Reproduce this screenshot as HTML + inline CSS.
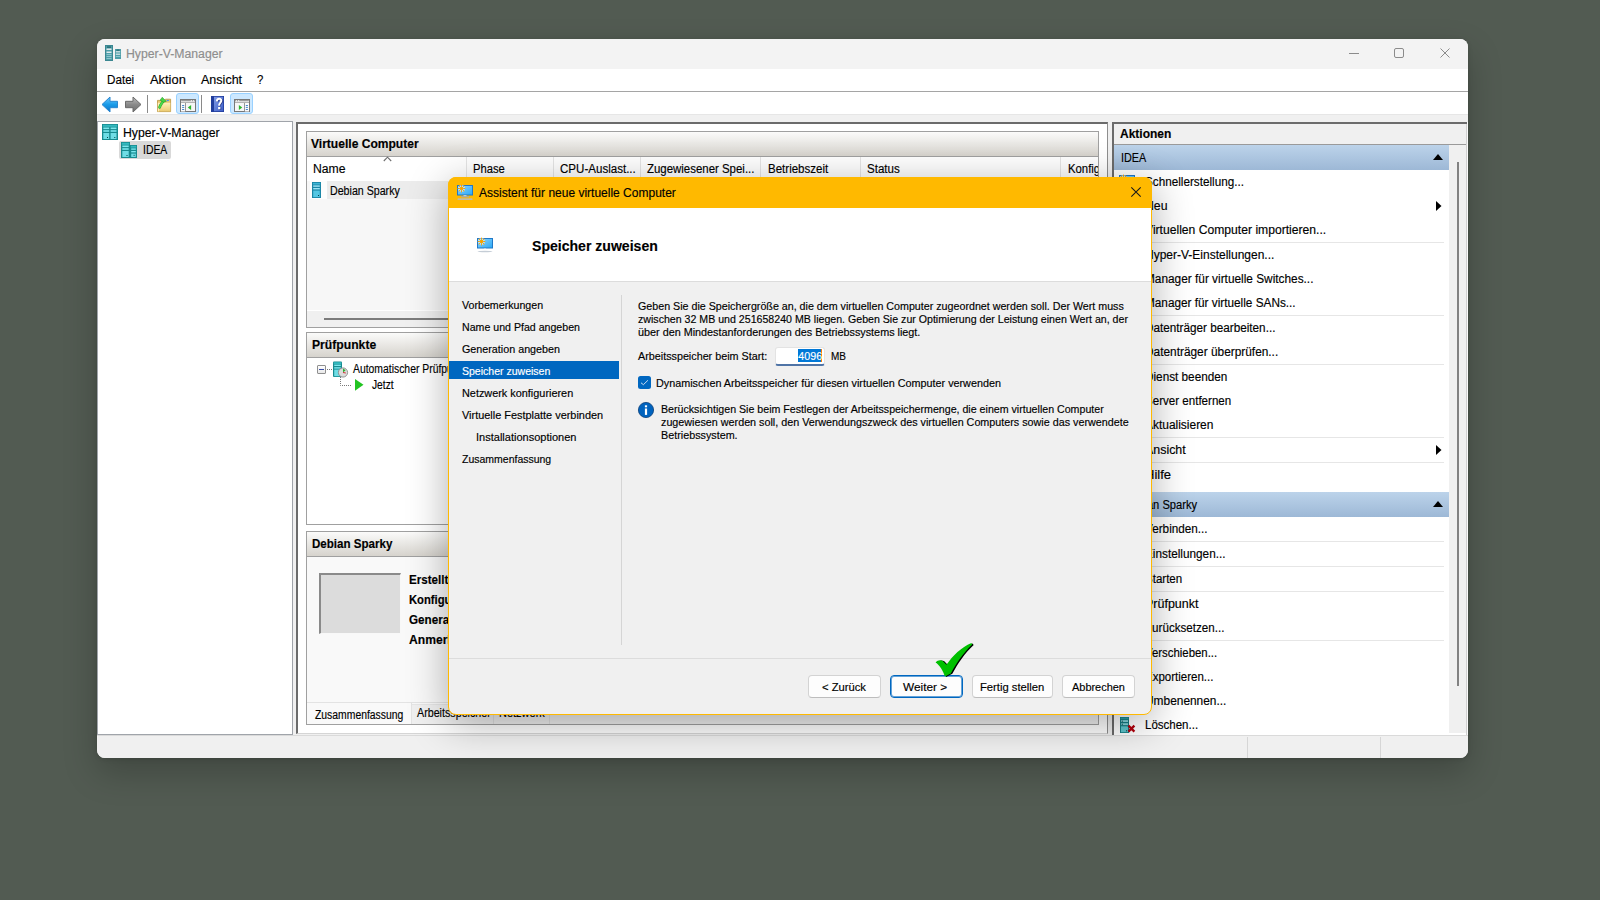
<!DOCTYPE html>
<html><head><meta charset="utf-8"><style>
*{margin:0;padding:0;box-sizing:border-box}
html,body{width:1600px;height:900px;overflow:hidden;background:#525b52;font-family:"Liberation Sans",sans-serif}
.t{position:absolute;white-space:nowrap;-webkit-text-stroke:0.15px currentColor}
svg{position:absolute;overflow:visible}
div{position:absolute}
</style></head>
<body>
<div style="position:absolute;left:97px;top:39px;width:1371px;height:719px;border-radius:8px;background:#f0f0f0;box-shadow:0 14px 34px rgba(0,0,0,0.22),0 1px 5px rgba(0,0,0,0.12)"></div>
<div style="position:absolute;left:97px;top:39px;width:1371px;height:30px;background:#f3f3f3;border-radius:8px 8px 0 0"></div>
<svg style="left:105px;top:44px;" width="17" height="17" viewBox="0 0 17 17">
<rect x="0" y="1" width="8" height="16" fill="#4e9ea8"/><rect x="0.5" y="1.5" width="7" height="15" fill="none" stroke="#3b8791" stroke-width="1"/>
<rect x="2" y="2.5" width="4" height="1.2" fill="#1f5f66"/>
<rect x="1.5" y="4.5" width="5" height="1.5" fill="#dfe9ec"/><rect x="1.5" y="7.5" width="5" height="1.5" fill="#dfe9ec"/>
<rect x="1.5" y="10" width="5" height="0.8" fill="#9fd0d8"/><rect x="1.5" y="12" width="5" height="0.8" fill="#9fd0d8"/><rect x="1.5" y="14" width="5" height="0.8" fill="#9fd0d8"/>
<rect x="10" y="5" width="6" height="10" fill="#4e9ea8"/><rect x="11.5" y="5.6" width="3" height="1" fill="#1f5f66"/>
<rect x="10.8" y="7.2" width="4.4" height="1.2" fill="#dfe9ec"/><rect x="10.8" y="9.6" width="4.4" height="1.2" fill="#dfe9ec"/>
<rect x="10.8" y="12" width="4.4" height="0.8" fill="#9fd0d8"/></svg>
<div class="t" style="left:126px;top:46.84px;font-size:12px;line-height:15.0px;color:#8e8e8e;font-weight:normal;transform:scaleX(1.0201);transform-origin:0 0;">Hyper-V-Manager</div>
<div style="position:absolute;left:1349px;top:53px;width:10px;height:1px;background:#8b8b8b"></div>
<div style="position:absolute;left:1394px;top:48px;width:10px;height:10px;border:1px solid #8b8b8b;border-radius:2px"></div>
<svg style="left:1440px;top:48px;" width="10" height="10" viewBox="0 0 10 10"><path d="M0.5 0.5L9.5 9.5M9.5 0.5L0.5 9.5" stroke="#8b8b8b" stroke-width="1"/></svg>
<div style="position:absolute;left:97px;top:69px;width:1371px;height:22px;background:#fff"></div>
<div style="position:absolute;left:97px;top:91px;width:1371px;height:1px;background:#a5a5a5"></div>
<div class="t" style="left:107.4px;top:72.94px;font-size:12px;line-height:15.0px;color:#000;font-weight:normal;transform:scaleX(0.9710);transform-origin:0 0;">Datei</div>
<div class="t" style="left:150px;top:72.94px;font-size:12px;line-height:15.0px;color:#000;font-weight:normal;transform:scaleX(1.0734);transform-origin:0 0;">Aktion</div>
<div class="t" style="left:200.7px;top:72.94px;font-size:12px;line-height:15.0px;color:#000;font-weight:normal;transform:scaleX(1.0445);transform-origin:0 0;">Ansicht</div>
<div class="t" style="left:257px;top:72.94px;font-size:12px;line-height:15.0px;color:#000;font-weight:normal;transform:scaleX(0.9441);transform-origin:0 0;">?</div>
<div style="position:absolute;left:97px;top:92px;width:1371px;height:22px;background:#fff"></div>
<div style="position:absolute;left:97px;top:114px;width:1371px;height:1px;background:#e6e6e6"></div>
<svg style="left:101px;top:96px;" width="18" height="17" viewBox="0 0 18 17"><defs><linearGradient id="gb" x1="0" y1="0" x2="0" y2="1"><stop offset="0" stop-color="#6fcaff"/><stop offset="0.5" stop-color="#1a9be8"/><stop offset="1" stop-color="#0d74c9"/></linearGradient>
<linearGradient id="gg" x1="0" y1="0" x2="0" y2="1"><stop offset="0" stop-color="#bdbdbd"/><stop offset="0.5" stop-color="#8a8a8a"/><stop offset="1" stop-color="#6d6d6d"/></linearGradient></defs>
<path d="M1 8.5L9 1V5.3H16.5V11.7H9V16Z" fill="url(#gb)" stroke="#2a86d0" stroke-width="1" stroke-linejoin="round"/></svg>
<svg style="left:124px;top:96px;" width="18" height="17" viewBox="0 0 18 17"><path d="M17 8.5L9 1V5.3H1.5V11.7H9V16Z" fill="url(#gg)" stroke="#6a6a6a" stroke-width="1" stroke-linejoin="round"/></svg>
<div style="position:absolute;left:147px;top:95px;width:1px;height:18px;background:#8a8a8a"></div>
<svg style="left:157px;top:97px;" width="15" height="16" viewBox="0 0 15 16"><defs><linearGradient id="gf" x1="0" y1="0" x2="0" y2="1"><stop offset="0" stop-color="#fff0b8"/><stop offset="1" stop-color="#eccb72"/></linearGradient></defs>
<path d="M0.5 3.4H7.6L8.4 2.2H13.6V14.6H0.5Z" fill="#e9c66f" stroke="#b9933f" stroke-width="0.8"/>
<rect x="0.9" y="5.8" width="12.4" height="8.5" fill="url(#gf)"/><rect x="0.9" y="5.8" width="1" height="8.5" fill="#fff3c2"/>
<ellipse cx="10.8" cy="3.5" rx="1.3" ry="0.75" fill="#4b8fe6"/>
<path d="M2.6 10.3C3.2 8.2 4.6 6.6 6.2 4.2" fill="none" stroke="#2f9f2f" stroke-width="2.8" stroke-linecap="round"/>
<path d="M2.6 10.3C3.2 8.2 4.6 6.6 6.2 4.2" fill="none" stroke="#4cdc4c" stroke-width="1.8" stroke-linecap="round"/>
<path d="M3.1 3.2L5.2 0.3L9.3 4.4L6.4 5.2Z" fill="#45d645" stroke="#2a9a2a" stroke-width="0.6" stroke-linejoin="round"/></svg>
<div style="position:absolute;left:176px;top:93px;width:23px;height:21px;background:#cce8ff;border:1px solid #99d1ff;border-radius:3px"></div>
<svg style="left:180px;top:99px;" width="16" height="13" viewBox="0 0 16 13"><g><rect x="0.5" y="0.5" width="15" height="12" fill="#f6f6f6" stroke="#777" stroke-width="1"/>
<rect x="1" y="1" width="14" height="2.3" fill="#e6e6e6"/>
<rect x="1.2" y="1.2" width="9.6" height="0.9" fill="#8a8a8a"/><rect x="12" y="1.2" width="1" height="1" fill="#8a8a8a"/><rect x="14" y="1.2" width="1" height="1" fill="#8a8a8a"/>
<rect x="1" y="3.3" width="14" height="0.7" fill="#9a9a9a"/>
<rect x="1" y="4" width="4" height="8.5" fill="#fbfbfb"/><rect x="5" y="4" width="0.9" height="8.5" fill="#8d8d8d"/>
<rect x="2.1" y="6.1" width="2.1" height="0.9" fill="#2f78c8"/><rect x="2.1" y="7.9" width="2.1" height="0.9" fill="#2f78c8"/><rect x="2.1" y="10" width="2.1" height="0.9" fill="#2f78c8"/>
<path d="M7.8 8.5L11.1 6V11Z" fill="#2db52d"/></g></svg>
<div style="position:absolute;left:201px;top:95px;width:1px;height:18px;background:#8a8a8a"></div>
<svg style="left:211px;top:96px;" width="13" height="16" viewBox="0 0 13 16"><defs><linearGradient id="gh" x1="0" y1="0" x2="1" y2="1"><stop offset="0" stop-color="#7f9ae6"/><stop offset="1" stop-color="#3f5fc8"/></linearGradient></defs>
<rect x="0" y="0" width="13" height="16" fill="#213d9c"/><rect x="3" y="0.8" width="9.2" height="14.4" fill="url(#gh)"/>
<path d="M5.9 5.4C5.9 3.5 6.9 2.7 8.1 2.7C9.5 2.7 10.3 3.6 10.3 4.8C10.3 6.5 8.3 7.1 8.2 8.9V9.8" fill="none" stroke="#1d2f80" stroke-width="2.2" transform="translate(0.5,0.4)"/>
<path d="M5.9 5.4C5.9 3.5 6.9 2.7 8.1 2.7C9.5 2.7 10.3 3.6 10.3 4.8C10.3 6.5 8.3 7.1 8.2 8.9V9.8" fill="none" stroke="#fff" stroke-width="2"/>
<rect x="7.6" y="11.3" width="2.6" height="2.4" fill="#1d2f80"/><rect x="7.1" y="11" width="2.3" height="2.3" fill="#fff"/></svg>
<div style="position:absolute;left:230px;top:93px;width:23px;height:21px;background:#cce8ff;border:1px solid #99d1ff;border-radius:3px"></div>
<svg style="left:234px;top:99px;" width="16" height="13" viewBox="0 0 16 13"><g transform="translate(16,0) scale(-1,1)"><rect x="0.5" y="0.5" width="15" height="12" fill="#f6f6f6" stroke="#777" stroke-width="1"/>
<rect x="1" y="1" width="14" height="2.3" fill="#e6e6e6"/>
<rect x="1.2" y="1.2" width="9.6" height="0.9" fill="#8a8a8a"/><rect x="12" y="1.2" width="1" height="1" fill="#8a8a8a"/><rect x="14" y="1.2" width="1" height="1" fill="#8a8a8a"/>
<rect x="1" y="3.3" width="14" height="0.7" fill="#9a9a9a"/>
<rect x="1" y="4" width="4" height="8.5" fill="#fbfbfb"/><rect x="5" y="4" width="0.9" height="8.5" fill="#8d8d8d"/>
<rect x="2.1" y="6.1" width="2.1" height="0.9" fill="#2f78c8"/><rect x="2.1" y="7.9" width="2.1" height="0.9" fill="#2f78c8"/><rect x="2.1" y="10" width="2.1" height="0.9" fill="#2f78c8"/>
<path d="M7.8 8.5L11.1 6V11Z" fill="#2db52d"/></g></svg>
<div style="position:absolute;left:97px;top:121px;width:196px;height:614px;background:#fff;border:1px solid #a0a4aa"></div>
<svg style="left:102px;top:124px;" width="16" height="16" viewBox="0 0 16 16"><rect x="0" y="0" width="16" height="16" fill="#178a8f"/><rect x="0.8" y="0.8" width="14.4" height="2" fill="#33b9bf"/>
<rect x="1.3" y="3.5" width="5.9" height="1.6" fill="#7be7ee"/><rect x="8.6" y="3.5" width="5.9" height="1.6" fill="#7be7ee"/>
<rect x="1.3" y="6.2" width="5.9" height="1.6" fill="#7be7ee"/><rect x="8.6" y="6.2" width="5.9" height="1.6" fill="#7be7ee"/>
<rect x="1.3" y="9" width="5.9" height="6" fill="#6fdde5"/><rect x="8.6" y="9" width="5.9" height="6" fill="#6fdde5"/>
<rect x="5" y="13" width="1" height="1" fill="#0a3f44"/><rect x="12.3" y="13" width="1" height="1" fill="#0a3f44"/></svg>
<div style="position:absolute;left:119px;top:141px;width:52px;height:18px;background:#d9d9d9;border-radius:2px"></div>
<svg style="left:121px;top:142px;" width="16" height="16" viewBox="0 0 16 16"><rect x="0" y="0" width="9" height="16" fill="#178a8f"/><rect x="0.8" y="0.8" width="7.4" height="2" fill="#33b9bf"/>
<rect x="1.3" y="3.5" width="6.4" height="1.6" fill="#7be7ee"/><rect x="1.3" y="6.2" width="6.4" height="1.6" fill="#7be7ee"/>
<rect x="1.3" y="9" width="6.4" height="6" fill="#6fdde5"/><rect x="5.5" y="13" width="1" height="1" fill="#0a3f44"/>
<rect x="9" y="3" width="7" height="13" fill="#178a8f"/><rect x="9.8" y="3.8" width="5.4" height="1.8" fill="#33b9bf"/>
<rect x="10.2" y="6.4" width="4.6" height="1.4" fill="#7be7ee"/><rect x="10.2" y="9" width="4.6" height="1.4" fill="#7be7ee"/><rect x="10.2" y="11.6" width="4.6" height="3.4" fill="#6fdde5"/>
<rect x="12.6" y="12.8" width="1" height="1" fill="#0a3f44"/></svg>
<div class="t" style="left:123.2px;top:125.54px;font-size:12px;line-height:15.0px;color:#000;font-weight:normal;transform:scaleX(1.0201);transform-origin:0 0;">Hyper-V-Manager</div>
<div class="t" style="left:142.5px;top:143.04px;font-size:12px;line-height:15.0px;color:#000;font-weight:normal;transform:scaleX(0.8676);transform-origin:0 0;">IDEA</div>
<div style="position:absolute;left:296px;top:122px;width:812px;height:612px;background:#fff;border-top:2px solid #6b6b6b;border-left:2px solid #6b6b6b;border-right:1px solid #8e8e8e;border-bottom:1px solid #d5d5d5"></div>
<div style="position:absolute;left:306px;top:131px;width:793px;height:197px;background:#fff;border:1px solid #a0a0a0"></div>
<div style="position:absolute;left:307px;top:132px;width:791px;height:25px;background:linear-gradient(#fbfbfa,#d6d3cd);border-bottom:1px solid #a0a0a0"></div>
<div class="t" style="left:311.2px;top:137.34px;font-size:12px;line-height:15.0px;color:#000;font-weight:bold;transform:scaleX(1.0044);transform-origin:0 0;">Virtuelle Computer</div>
<div style="position:absolute;left:306px;top:332px;width:793px;height:193px;background:#fff;border:1px solid #a0a0a0"></div>
<div style="position:absolute;left:307px;top:333px;width:791px;height:25px;background:linear-gradient(#fbfbfa,#d6d3cd);border-bottom:1px solid #a0a0a0"></div>
<div class="t" style="left:311.5px;top:337.84px;font-size:12px;line-height:15.0px;color:#000;font-weight:bold;transform:scaleX(1.0137);transform-origin:0 0;">Prüfpunkte</div>
<div style="position:absolute;left:306px;top:531px;width:793px;height:194px;background:#f9f9f9;border:1px solid #a0a0a0"></div>
<div style="position:absolute;left:307px;top:532px;width:791px;height:25px;background:linear-gradient(#fbfbfa,#d6d3cd);border-bottom:1px solid #a0a0a0"></div>
<div class="t" style="left:311.5px;top:537.34px;font-size:12px;line-height:15.0px;color:#000;font-weight:bold;transform:scaleX(0.9633);transform-origin:0 0;">Debian Sparky</div>
<div style="position:absolute;left:466px;top:157px;width:1px;height:20px;background:#e5e5e5"></div>
<div style="position:absolute;left:553px;top:157px;width:1px;height:20px;background:#e5e5e5"></div>
<div style="position:absolute;left:640px;top:157px;width:1px;height:20px;background:#e5e5e5"></div>
<div style="position:absolute;left:760px;top:157px;width:1px;height:20px;background:#e5e5e5"></div>
<div style="position:absolute;left:860px;top:157px;width:1px;height:20px;background:#e5e5e5"></div>
<div style="position:absolute;left:1060px;top:157px;width:1px;height:20px;background:#e5e5e5"></div>
<div class="t" style="left:313.3px;top:162.34px;font-size:12px;line-height:15.0px;color:#000;font-weight:normal;transform:scaleX(1.0154);transform-origin:0 0;">Name</div>
<div class="t" style="left:473px;top:162.34px;font-size:12px;line-height:15.0px;color:#000;font-weight:normal;transform:scaleX(0.9346);transform-origin:0 0;">Phase</div>
<div class="t" style="left:560px;top:162.34px;font-size:12px;line-height:15.0px;color:#000;font-weight:normal;transform:scaleX(0.9633);transform-origin:0 0;">CPU-Auslast...</div>
<div class="t" style="left:647px;top:162.34px;font-size:12px;line-height:15.0px;color:#000;font-weight:normal;transform:scaleX(0.9528);transform-origin:0 0;">Zugewiesener Spei...</div>
<div class="t" style="left:767.6px;top:162.34px;font-size:12px;line-height:15.0px;color:#000;font-weight:normal;transform:scaleX(0.9602);transform-origin:0 0;">Betriebszeit</div>
<div class="t" style="left:867px;top:162.34px;font-size:12px;line-height:15.0px;color:#000;font-weight:normal;transform:scaleX(0.9642);transform-origin:0 0;">Status</div>
<div style="left:1061px;top:157px;width:37px;height:22px;overflow:hidden">
<div class="t" style="left:6.5px;top:5.34px;font-size:12px;line-height:15.0px;color:#000;font-weight:normal;transform:scaleX(0.9447);transform-origin:0 0;">Konfiguration</div>
</div>
<svg style="left:383px;top:156px;" width="9" height="6" viewBox="0 0 9 6"><path d="M0.8 5L4.5 1.2L8.2 5" fill="none" stroke="#6d6d6d" stroke-width="1.1"/></svg>
<div style="position:absolute;left:307px;top:181px;width:791px;height:130px;background:#f7f7f7"></div>
<div style="position:absolute;left:310px;top:181px;width:17px;height:18px;background:#fdfdfd"></div>
<div style="position:absolute;left:327px;top:181px;width:771px;height:18px;background:#ececec"></div>
<svg style="left:312px;top:182px;" width="9" height="16" viewBox="0 0 9 16"><rect x="0" y="0" width="9" height="16" fill="#1b86a6"/><rect x="0.9" y="0.9" width="7.2" height="1.6" fill="#3fb5d5"/>
<rect x="1.2" y="3.4" width="6.6" height="1.4" fill="#9de4f5"/><rect x="1.2" y="6" width="6.6" height="1.4" fill="#9de4f5"/>
<rect x="1.2" y="8.6" width="6.6" height="6.5" fill="#55c7e3"/><rect x="6" y="13" width="1" height="1" fill="#0a3f44"/></svg>
<div class="t" style="left:329.5px;top:184.34px;font-size:12px;line-height:15.0px;color:#000;font-weight:normal;transform:scaleX(0.8869);transform-origin:0 0;">Debian Sparky</div>
<div style="position:absolute;left:307px;top:310px;width:791px;height:1px;background:#fff"></div>
<div style="position:absolute;left:307px;top:311px;width:791px;height:16px;background:#f0f0f0"></div>
<div style="position:absolute;left:324px;top:318px;width:770px;height:2px;background:#7c7c7c"></div>
<div style="position:absolute;left:317px;top:365px;width:9px;height:9px;border:1px solid #8f8f8f;border-radius:1px;background:linear-gradient(#fff,#e8e8e8)"></div>
<div style="position:absolute;left:319px;top:369px;width:5px;height:1px;background:#3a4fa8"></div>
<svg style="left:327px;top:369px;" width="6" height="1" viewBox="0 0 6 1"><path d="M0 0.5H6" stroke="#777" stroke-dasharray="1 1"/></svg>
<svg style="left:333px;top:361px;" width="15" height="17" viewBox="0 0 15 17"><rect x="0" y="0.5" width="9" height="15.5" rx="1" fill="#178a8f"/><rect x="0.8" y="1.2" width="7.4" height="1.8" fill="#33b9bf"/>
<rect x="1.2" y="3.6" width="6.6" height="1.4" fill="#7be7ee"/><rect x="1.2" y="6.2" width="6.6" height="1.4" fill="#7be7ee"/><rect x="1.2" y="8.6" width="6.6" height="6.6" fill="#6fdde5"/>
<circle cx="10" cy="11.5" r="4.6" fill="#dcdcdc" stroke="#8a8a8a" stroke-width="0.9"/><path d="M10 11.5L12.6 9.2L10 7.4Z" fill="#30b030"/><path d="M10 11.5L12.8 12" stroke="#d02020" stroke-width="0.9"/></svg>
<svg style="left:340px;top:377px;" width="12" height="10" viewBox="0 0 12 10"><path d="M0.5 0V8.5H11" fill="none" stroke="#777" stroke-dasharray="1 1"/></svg>
<svg style="left:355px;top:379px;" width="9" height="12" viewBox="0 0 9 12"><path d="M0 0L8.5 5.8L0 11.7Z" fill="#22c422"/></svg>
<div class="t" style="left:353.2px;top:362.14px;font-size:12px;line-height:15.0px;color:#000;font-weight:normal;transform:scaleX(0.8653);transform-origin:0 0;">Automatischer Prüfpunkt</div>
<div class="t" style="left:372px;top:378.34px;font-size:12px;line-height:15.0px;color:#000;font-weight:normal;transform:scaleX(0.8524);transform-origin:0 0;">Jetzt</div>
<div style="position:absolute;left:319px;top:573px;width:82px;height:61px;background:#dcdcdc;border-top:2px solid #8a8a8a;border-left:2px solid #8a8a8a;border-right:1px solid #f8f8f8;border-bottom:1px solid #f8f8f8"></div>
<div class="t" style="left:409.3px;top:573.14px;font-size:12px;line-height:15.0px;color:#000;font-weight:bold;transform:scaleX(0.9679);transform-origin:0 0;">Erstellt:</div>
<div class="t" style="left:409.3px;top:593.14px;font-size:12px;line-height:15.0px;color:#000;font-weight:bold;transform:scaleX(0.9361);transform-origin:0 0;">Konfigurationsversion:</div>
<div class="t" style="left:409.3px;top:613.14px;font-size:12px;line-height:15.0px;color:#000;font-weight:bold;transform:scaleX(0.9719);transform-origin:0 0;">Generation:</div>
<div class="t" style="left:409.3px;top:633.14px;font-size:12px;line-height:15.0px;color:#000;font-weight:bold;transform:scaleX(1.0094);transform-origin:0 0;">Anmerkungen:</div>
<div style="position:absolute;left:307px;top:702px;width:791px;height:1px;background:#e3e3e3"></div>
<div style="position:absolute;left:411px;top:704px;width:687px;height:20px;background:#f0f0f0;border-top:1px solid #e6e6e6"></div>
<div style="position:absolute;left:411px;top:703px;width:1px;height:21px;background:#e3e3e3"></div>
<div style="position:absolute;left:493px;top:704px;width:1px;height:20px;background:#e0e0e0"></div>
<div style="position:absolute;left:549px;top:704px;width:1px;height:20px;background:#e0e0e0"></div>
<div class="t" style="left:315.2px;top:707.84px;font-size:12px;line-height:15.0px;color:#000;font-weight:normal;transform:scaleX(0.8654);transform-origin:0 0;">Zusammenfassung</div>
<div class="t" style="left:416.9px;top:705.84px;font-size:12px;line-height:15.0px;color:#000;font-weight:normal;transform:scaleX(0.8924);transform-origin:0 0;">Arbeitsspeicher</div>
<div class="t" style="left:499px;top:705.84px;font-size:12px;line-height:15.0px;color:#000;font-weight:normal;transform:scaleX(0.9159);transform-origin:0 0;">Netzwerk</div>
<div style="position:absolute;left:1112px;top:122px;width:356px;height:613px;background:#fff;border-top:2px solid #6b6b6b;border-left:2px solid #6b6b6b"></div>
<div style="position:absolute;left:1114px;top:124px;width:352px;height:21px;background:#f0f0f0;border-bottom:1.5px solid #9a9a9a"></div>
<div class="t" style="left:1119.5px;top:126.84px;font-size:12px;line-height:15.0px;color:#000;font-weight:bold;transform:scaleX(0.9994);transform-origin:0 0;">Aktionen</div>
<div style="position:absolute;left:1114px;top:145px;width:335px;height:25px;background:linear-gradient(#bcd3ea,#9db8d6)"></div>
<div class="t" style="left:1121.3px;top:150.84px;font-size:12px;line-height:15.0px;color:#000;font-weight:normal;transform:scaleX(0.8997);transform-origin:0 0;">IDEA</div>
<svg style="left:1433px;top:154px;" width="10" height="6" viewBox="0 0 10 6"><path d="M0 6L5 0L10 6Z" fill="#000"/></svg>
<div class="t" style="left:1145px;top:175.14px;font-size:12px;line-height:15.0px;color:#000;font-weight:normal;transform:scaleX(0.9765);transform-origin:0 0;">Schnellerstellung...</div>
<div class="t" style="left:1145px;top:199.14px;font-size:12px;line-height:15.0px;color:#000;font-weight:normal;transform:scaleX(1.0221);transform-origin:0 0;">Neu</div>
<svg style="left:1436px;top:201px;" width="6" height="10" viewBox="0 0 6 10"><path d="M0 0L5.5 5L0 10Z" fill="#000"/></svg>
<div class="t" style="left:1145px;top:223.14px;font-size:12px;line-height:15.0px;color:#000;font-weight:normal;transform:scaleX(1.0113);transform-origin:0 0;">Virtuellen Computer importieren...</div>
<div style="position:absolute;left:1120px;top:242px;width:324px;height:1px;background:#e6e6e6"></div>
<div class="t" style="left:1145px;top:248.14px;font-size:12px;line-height:15.0px;color:#000;font-weight:normal;transform:scaleX(0.9993);transform-origin:0 0;">Hyper-V-Einstellungen...</div>
<div class="t" style="left:1145px;top:272.14px;font-size:12px;line-height:15.0px;color:#000;font-weight:normal;transform:scaleX(0.9864);transform-origin:0 0;">Manager für virtuelle Switches...</div>
<div class="t" style="left:1145px;top:296.14px;font-size:12px;line-height:15.0px;color:#000;font-weight:normal;transform:scaleX(0.9818);transform-origin:0 0;">Manager für virtuelle SANs...</div>
<div style="position:absolute;left:1120px;top:315px;width:324px;height:1px;background:#e6e6e6"></div>
<div class="t" style="left:1145px;top:321.14px;font-size:12px;line-height:15.0px;color:#000;font-weight:normal;transform:scaleX(0.9775);transform-origin:0 0;">Datenträger bearbeiten...</div>
<div class="t" style="left:1145px;top:345.14px;font-size:12px;line-height:15.0px;color:#000;font-weight:normal;transform:scaleX(0.9886);transform-origin:0 0;">Datenträger überprüfen...</div>
<div style="position:absolute;left:1120px;top:364px;width:324px;height:1px;background:#e6e6e6"></div>
<div class="t" style="left:1145px;top:370.14px;font-size:12px;line-height:15.0px;color:#000;font-weight:normal;transform:scaleX(0.9791);transform-origin:0 0;">Dienst beenden</div>
<div class="t" style="left:1145px;top:394.14px;font-size:12px;line-height:15.0px;color:#000;font-weight:normal;transform:scaleX(0.9644);transform-origin:0 0;">Server entfernen</div>
<div class="t" style="left:1145px;top:418.14px;font-size:12px;line-height:15.0px;color:#000;font-weight:normal;transform:scaleX(0.9957);transform-origin:0 0;">Aktualisieren</div>
<div style="position:absolute;left:1120px;top:437px;width:324px;height:1px;background:#e6e6e6"></div>
<div class="t" style="left:1145px;top:443.14px;font-size:12px;line-height:15.0px;color:#000;font-weight:normal;transform:scaleX(1.0343);transform-origin:0 0;">Ansicht</div>
<svg style="left:1436px;top:445px;" width="6" height="10" viewBox="0 0 6 10"><path d="M0 0L5.5 5L0 10Z" fill="#000"/></svg>
<div style="position:absolute;left:1120px;top:462px;width:324px;height:1px;background:#e6e6e6"></div>
<div class="t" style="left:1145px;top:468.14px;font-size:12px;line-height:15.0px;color:#000;font-weight:normal;transform:scaleX(1.0872);transform-origin:0 0;">Hilfe</div>
<div style="position:absolute;left:1114px;top:492px;width:335px;height:25px;background:linear-gradient(#bcd3ea,#9db8d6)"></div>
<div class="t" style="left:1123.5px;top:497.84px;font-size:12px;line-height:15.0px;color:#000;font-weight:normal;transform:scaleX(0.9288);transform-origin:0 0;">Debian Sparky</div>
<svg style="left:1433px;top:501px;" width="10" height="6" viewBox="0 0 10 6"><path d="M0 6L5 0L10 6Z" fill="#000"/></svg>
<div class="t" style="left:1145px;top:522.14px;font-size:12px;line-height:15.0px;color:#000;font-weight:normal;transform:scaleX(0.9774);transform-origin:0 0;">Verbinden...</div>
<div style="position:absolute;left:1120px;top:541px;width:324px;height:1px;background:#e6e6e6"></div>
<div class="t" style="left:1145px;top:547.14px;font-size:12px;line-height:15.0px;color:#000;font-weight:normal;transform:scaleX(0.9811);transform-origin:0 0;">Einstellungen...</div>
<div style="position:absolute;left:1120px;top:566px;width:324px;height:1px;background:#e6e6e6"></div>
<div class="t" style="left:1145px;top:572.14px;font-size:12px;line-height:15.0px;color:#000;font-weight:normal;transform:scaleX(0.9616);transform-origin:0 0;">Starten</div>
<div style="position:absolute;left:1120px;top:591px;width:324px;height:1px;background:#e6e6e6"></div>
<div class="t" style="left:1145px;top:597.14px;font-size:12px;line-height:15.0px;color:#000;font-weight:normal;transform:scaleX(1.0397);transform-origin:0 0;">Prüfpunkt</div>
<div class="t" style="left:1145px;top:621.14px;font-size:12px;line-height:15.0px;color:#000;font-weight:normal;transform:scaleX(0.9680);transform-origin:0 0;">Zurücksetzen...</div>
<div style="position:absolute;left:1120px;top:640px;width:324px;height:1px;background:#e6e6e6"></div>
<div class="t" style="left:1145px;top:646.14px;font-size:12px;line-height:15.0px;color:#000;font-weight:normal;transform:scaleX(0.9494);transform-origin:0 0;">Verschieben...</div>
<div class="t" style="left:1145px;top:670.14px;font-size:12px;line-height:15.0px;color:#000;font-weight:normal;transform:scaleX(0.9585);transform-origin:0 0;">Exportieren...</div>
<div class="t" style="left:1145px;top:694.14px;font-size:12px;line-height:15.0px;color:#000;font-weight:normal;transform:scaleX(0.9921);transform-origin:0 0;">Umbenennen...</div>
<div class="t" style="left:1145px;top:718.14px;font-size:12px;line-height:15.0px;color:#000;font-weight:normal;transform:scaleX(0.9591);transform-origin:0 0;">Löschen...</div>
<svg style="left:1119px;top:175px;" width="16" height="16" viewBox="0 0 16 16"><defs><linearGradient id="gm" x1="0" y1="0" x2="1" y2="1"><stop offset="0" stop-color="#8fd5ff"/><stop offset="1" stop-color="#2aa8f5"/></linearGradient></defs>
<rect x="0.5" y="0.5" width="15" height="9.5" fill="url(#gm)" stroke="#1f78c8" stroke-width="1"/>
<circle cx="4.5" cy="3.5" r="3.6" fill="#c8ecff" opacity="0.7"/><circle cx="4.5" cy="3.5" r="1.7" fill="#ffbf1a"/><path d="M4.5 0V7M1 3.5H8M2 1L7 6M7 1L2 6" stroke="#f5a000" stroke-width="0.8"/>
<circle cx="4.5" cy="0.2" r="0.6" fill="#f59a00"/><circle cx="4.5" cy="6.8" r="0.6" fill="#f59a00"/><circle cx="1.2" cy="3.5" r="0.6" fill="#f59a00"/><circle cx="7.8" cy="3.5" r="0.6" fill="#f59a00"/>
<circle cx="2.1" cy="1.1" r="0.55" fill="#f59a00"/><circle cx="6.9" cy="1.1" r="0.55" fill="#f59a00"/><circle cx="2.1" cy="5.9" r="0.55" fill="#f59a00"/><circle cx="6.9" cy="5.9" r="0.55" fill="#f59a00"/><rect x="6.5" y="10.2" width="3" height="1.2" fill="#c8d8f0"/><rect x="4" y="11.3" width="8" height="1" fill="#8aa6d6"/><rect x="0.5" y="13.5" width="15" height="1.3" rx="0.6" fill="#a9bde6"/></svg>
<svg style="left:1120px;top:717px;" width="18" height="17" viewBox="0 0 18 17"><rect x="0" y="0" width="9" height="16" fill="#147d84"/><rect x="0.6" y="0.6" width="7.8" height="1.6" fill="#2a9ea5"/>
<rect x="1" y="3.1" width="7" height="1.9" fill="#86d7dd"/><rect x="1" y="6.2" width="7" height="1.9" fill="#86d7dd"/>
<rect x="1.8" y="3.6" width="0.9" height="1.2" fill="#0b3c40"/><rect x="1.8" y="6.7" width="0.9" height="1.2" fill="#0b3c40"/>
<rect x="1" y="9.3" width="7" height="5.9" fill="#5fc6cd"/><rect x="6" y="13.3" width="1" height="1" fill="#0b3c40"/>
<path d="M8.4 8.6L14.4 14.6M14.4 8.6L8.4 14.6" stroke="#b3000c" stroke-width="2.3"/></svg>
<div style="position:absolute;left:1449px;top:145px;width:18px;height:588px;background:#f0f0f0"></div>
<div style="position:absolute;left:1457px;top:162px;width:2px;height:524px;background:#828282"></div>
<div style="position:absolute;left:1466px;top:124px;width:1px;height:611px;background:#d0d0d0"></div>
<div style="position:absolute;left:1467px;top:122px;width:1px;height:613px;background:#fafafa"></div>
<div style="position:absolute;left:97px;top:735px;width:1371px;height:23px;background:#f0f0f0;border-top:1px solid #dadada;border-radius:0 0 8px 8px"></div>
<div style="position:absolute;left:1247px;top:737px;width:1px;height:21px;background:#d6d6d6"></div>
<div style="position:absolute;left:1380px;top:737px;width:1px;height:21px;background:#d6d6d6"></div>
<div style="position:absolute;left:448px;top:177px;width:704px;height:538px;border-radius:8px;border:1px solid #ffb900;background:#f0f0f0;box-shadow:0 8px 40px rgba(0,0,0,0.32)"></div>
<div style="position:absolute;left:448px;top:177px;width:704px;height:31px;background:#ffb900;border-radius:8px 8px 0 0"></div>
<svg style="left:457px;top:185px;" width="16" height="16" viewBox="0 0 16 16"><defs><linearGradient id="gm" x1="0" y1="0" x2="1" y2="1"><stop offset="0" stop-color="#8fd5ff"/><stop offset="1" stop-color="#2aa8f5"/></linearGradient></defs>
<rect x="0.5" y="0.5" width="15" height="9.5" fill="url(#gm)" stroke="#1f78c8" stroke-width="1"/>
<circle cx="4.5" cy="3.5" r="3.6" fill="#c8ecff" opacity="0.7"/><circle cx="4.5" cy="3.5" r="1.7" fill="#ffbf1a"/><path d="M4.5 0V7M1 3.5H8M2 1L7 6M7 1L2 6" stroke="#f5a000" stroke-width="0.8"/>
<circle cx="4.5" cy="0.2" r="0.6" fill="#f59a00"/><circle cx="4.5" cy="6.8" r="0.6" fill="#f59a00"/><circle cx="1.2" cy="3.5" r="0.6" fill="#f59a00"/><circle cx="7.8" cy="3.5" r="0.6" fill="#f59a00"/>
<circle cx="2.1" cy="1.1" r="0.55" fill="#f59a00"/><circle cx="6.9" cy="1.1" r="0.55" fill="#f59a00"/><circle cx="2.1" cy="5.9" r="0.55" fill="#f59a00"/><circle cx="6.9" cy="5.9" r="0.55" fill="#f59a00"/><rect x="6.5" y="10.2" width="3" height="1.2" fill="#c8d8f0"/><rect x="4" y="11.3" width="8" height="1" fill="#8aa6d6"/><rect x="0.5" y="13.5" width="15" height="1.3" rx="0.6" fill="#a9bde6"/></svg>
<div class="t" style="left:479px;top:185.74px;font-size:12px;line-height:15.0px;color:#000;font-weight:normal;transform:scaleX(1.0003);transform-origin:0 0;">Assistent für neue virtuelle Computer</div>
<svg style="left:1131px;top:187px;" width="10" height="10" viewBox="0 0 10 10"><path d="M0.3 0.3L9.7 9.7M9.7 0.3L0.3 9.7" stroke="#1a1a1a" stroke-width="1.1"/></svg>
<div style="position:absolute;left:449px;top:208px;width:702px;height:74px;background:#fff;border-bottom:1px solid #dcdcdc"></div>
<svg style="left:477px;top:238px;" width="16" height="16" viewBox="0 0 16 16"><defs><linearGradient id="gm" x1="0" y1="0" x2="1" y2="1"><stop offset="0" stop-color="#8fd5ff"/><stop offset="1" stop-color="#2aa8f5"/></linearGradient></defs>
<rect x="0.5" y="0.5" width="15" height="9.5" fill="url(#gm)" stroke="#1f78c8" stroke-width="1"/>
<circle cx="4.5" cy="3.5" r="3.6" fill="#c8ecff" opacity="0.7"/><circle cx="4.5" cy="3.5" r="1.7" fill="#ffbf1a"/><path d="M4.5 0V7M1 3.5H8M2 1L7 6M7 1L2 6" stroke="#f5a000" stroke-width="0.8"/>
<circle cx="4.5" cy="0.2" r="0.6" fill="#f59a00"/><circle cx="4.5" cy="6.8" r="0.6" fill="#f59a00"/><circle cx="1.2" cy="3.5" r="0.6" fill="#f59a00"/><circle cx="7.8" cy="3.5" r="0.6" fill="#f59a00"/>
<circle cx="2.1" cy="1.1" r="0.55" fill="#f59a00"/><circle cx="6.9" cy="1.1" r="0.55" fill="#f59a00"/><circle cx="2.1" cy="5.9" r="0.55" fill="#f59a00"/><circle cx="6.9" cy="5.9" r="0.55" fill="#f59a00"/><rect x="7" y="10.2" width="2" height="0.8" fill="#c8d8e8"/><ellipse cx="8" cy="13.5" rx="7.5" ry="0.8" fill="#c5cdd6"/></svg>
<div class="t" style="left:532.4px;top:238.20px;font-size:14px;line-height:17.5px;color:#000;font-weight:bold;transform:scaleX(1.0043);transform-origin:0 0;">Speicher zuweisen</div>
<div style="position:absolute;left:449px;top:361px;width:170px;height:18px;background:#0067c0"></div>
<div class="t" style="left:461.8px;top:299.10px;font-size:10.7px;line-height:13.38px;color:#000;font-weight:normal;transform:scaleX(0.9965);transform-origin:0 0;">Vorbemerkungen</div>
<div class="t" style="left:461.8px;top:321.10px;font-size:10.7px;line-height:13.38px;color:#000;font-weight:normal;transform:scaleX(0.9927);transform-origin:0 0;">Name und Pfad angeben</div>
<div class="t" style="left:461.8px;top:343.10px;font-size:10.7px;line-height:13.38px;color:#000;font-weight:normal;transform:scaleX(1.0055);transform-origin:0 0;">Generation angeben</div>
<div class="t" style="left:461.8px;top:365.10px;font-size:10.7px;line-height:13.38px;color:#fff;font-weight:normal;transform:scaleX(0.9843);transform-origin:0 0;">Speicher zuweisen</div>
<div class="t" style="left:461.8px;top:387.10px;font-size:10.7px;line-height:13.38px;color:#000;font-weight:normal;transform:scaleX(1.0172);transform-origin:0 0;">Netzwerk konfigurieren</div>
<div class="t" style="left:461.8px;top:409.10px;font-size:10.7px;line-height:13.38px;color:#000;font-weight:normal;transform:scaleX(1.0211);transform-origin:0 0;">Virtuelle Festplatte verbinden</div>
<div class="t" style="left:476.4px;top:431.10px;font-size:10.7px;line-height:13.38px;color:#000;font-weight:normal;transform:scaleX(1.0312);transform-origin:0 0;">Installationsoptionen</div>
<div class="t" style="left:461.8px;top:453.10px;font-size:10.7px;line-height:13.38px;color:#000;font-weight:normal;transform:scaleX(0.9815);transform-origin:0 0;">Zusammenfassung</div>
<div style="position:absolute;left:621px;top:295px;width:1px;height:350px;background:#d5d5d5"></div>
<div class="t" style="left:637.8px;top:300.00px;font-size:10.7px;line-height:13.38px;color:#000;font-weight:normal;transform:scaleX(1.0001);transform-origin:0 0;">Geben Sie die Speichergröße an, die dem virtuellen Computer zugeordnet werden soll. Der Wert muss</div>
<div class="t" style="left:637.8px;top:312.90px;font-size:10.7px;line-height:13.38px;color:#000;font-weight:normal;transform:scaleX(0.9928);transform-origin:0 0;">zwischen 32 MB und 251658240 MB liegen. Geben Sie zur Optimierung der Leistung einen Wert an, der</div>
<div class="t" style="left:637.8px;top:325.80px;font-size:10.7px;line-height:13.38px;color:#000;font-weight:normal;transform:scaleX(1.0113);transform-origin:0 0;">über den Mindestanforderungen des Betriebssystems liegt.</div>
<div class="t" style="left:638px;top:349.90px;font-size:10.7px;line-height:13.38px;color:#000;font-weight:normal;transform:scaleX(1.0074);transform-origin:0 0;">Arbeitsspeicher beim Start:</div>
<div style="position:absolute;left:775px;top:347px;width:50px;height:19px;background:#fff;border:1px solid #e3e3e3;border-bottom:2px solid #4f74a6;border-radius:3px"></div>
<div style="position:absolute;left:798px;top:349px;width:24px;height:13px;background:#0078d7"></div>
<div style="position:absolute;left:821px;top:349px;width:1px;height:13px;background:#ff7a00"></div>
<div class="t" style="left:798.3px;top:349.90px;font-size:10.7px;line-height:13.38px;color:#fff;font-weight:normal;">4096</div>
<div class="t" style="left:830.8px;top:349.90px;font-size:10.7px;line-height:13.38px;color:#000;font-weight:normal;transform:scaleX(0.9346);transform-origin:0 0;">MB</div>
<div style="position:absolute;left:638px;top:376px;width:13px;height:13px;background:#0067c0;border-radius:2.5px"></div>
<svg style="left:638px;top:376px;" width="13" height="13" viewBox="0 0 13 13"><path d="M3 6.8L5.4 8.7L9.9 4.3" fill="none" stroke="#dfe9f5" stroke-width="0.9"/></svg>
<div class="t" style="left:656.3px;top:376.60px;font-size:10.7px;line-height:13.38px;color:#000;font-weight:normal;transform:scaleX(1.0098);transform-origin:0 0;">Dynamischen Arbeitsspeicher für diesen virtuellen Computer verwenden</div>
<svg style="left:638px;top:402px;" width="16" height="16" viewBox="0 0 16 16"><circle cx="8" cy="8" r="7.6" fill="#0063be" stroke="#0a3f78" stroke-width="0.8"/><rect x="6.9" y="3.3" width="2.2" height="2" fill="#fff"/><rect x="6.9" y="6.5" width="2.2" height="6.4" fill="#fff"/></svg>
<div class="t" style="left:660.6px;top:403.40px;font-size:10.7px;line-height:13.38px;color:#000;font-weight:normal;transform:scaleX(0.9950);transform-origin:0 0;">Berücksichtigen Sie beim Festlegen der Arbeitsspeichermenge, die einem virtuellen Computer</div>
<div class="t" style="left:660.6px;top:416.10px;font-size:10.7px;line-height:13.38px;color:#000;font-weight:normal;transform:scaleX(1.0067);transform-origin:0 0;">zugewiesen werden soll, den Verwendungszweck des virtuellen Computers sowie das verwendete</div>
<div class="t" style="left:660.6px;top:428.80px;font-size:10.7px;line-height:13.38px;color:#000;font-weight:normal;transform:scaleX(1.0078);transform-origin:0 0;">Betriebssystem.</div>
<div style="position:absolute;left:449px;top:658px;width:702px;height:1px;background:#dcdcdc"></div>
<div style="position:absolute;left:808px;top:675px;width:73px;height:23px;background:#fdfdfd;border:1px solid #d3d3d3;border-bottom-color:#bdbdbd;border-radius:4px"></div>
<div style="position:absolute;left:890px;top:675px;width:73px;height:23px;background:#fdfdfd;border:1px solid #0067c0;box-shadow:inset 0 0 0 1px rgba(0,103,192,0.6);border-radius:4px"></div>
<div style="position:absolute;left:972px;top:675px;width:81px;height:23px;background:#fdfdfd;border:1px solid #d3d3d3;border-bottom-color:#bdbdbd;border-radius:4px"></div>
<div style="position:absolute;left:1062px;top:675px;width:73px;height:23px;background:#fdfdfd;border:1px solid #d3d3d3;border-bottom-color:#bdbdbd;border-radius:4px"></div>
<div class="t" style="left:821.7px;top:680.80px;font-size:10.7px;line-height:13.38px;color:#000;font-weight:normal;transform:scaleX(1.0496);transform-origin:0 0;">&lt; Zurück</div>
<div class="t" style="left:903.2px;top:680.80px;font-size:10.7px;line-height:13.38px;color:#000;font-weight:normal;transform:scaleX(1.1066);transform-origin:0 0;">Weiter &gt;</div>
<div class="t" style="left:979.7px;top:680.80px;font-size:10.7px;line-height:13.38px;color:#000;font-weight:normal;transform:scaleX(1.0514);transform-origin:0 0;">Fertig stellen</div>
<div class="t" style="left:1071.5px;top:680.80px;font-size:10.7px;line-height:13.38px;color:#000;font-weight:normal;transform:scaleX(1.0241);transform-origin:0 0;">Abbrechen</div>
<svg style="left:934px;top:642px;" width="40" height="36" viewBox="0 0 40 36"><path transform="translate(0.5,0.3)" d="M2.6 20.4C4.5 18.2 7.5 17.6 9.8 19L13.4 22.8C20 13.5 28 5.5 38 1.2L39.2 2.6C30 11 23.5 21 17.8 31.4L11.6 34.8C10 28.5 6.5 23 2.6 20.4Z" fill="#000"/>
<path d="M1.6 20.4C3.5 18.2 6.5 17.6 8.8 19L12.4 22.8C19 13.5 27 5.5 37.5 1L38.2 2.4C29 11 22.5 21 16.8 31.4L11 34.6C9 28.5 5.5 23 1.6 20.4Z" fill="#00c000"/></svg>
</body></html>
